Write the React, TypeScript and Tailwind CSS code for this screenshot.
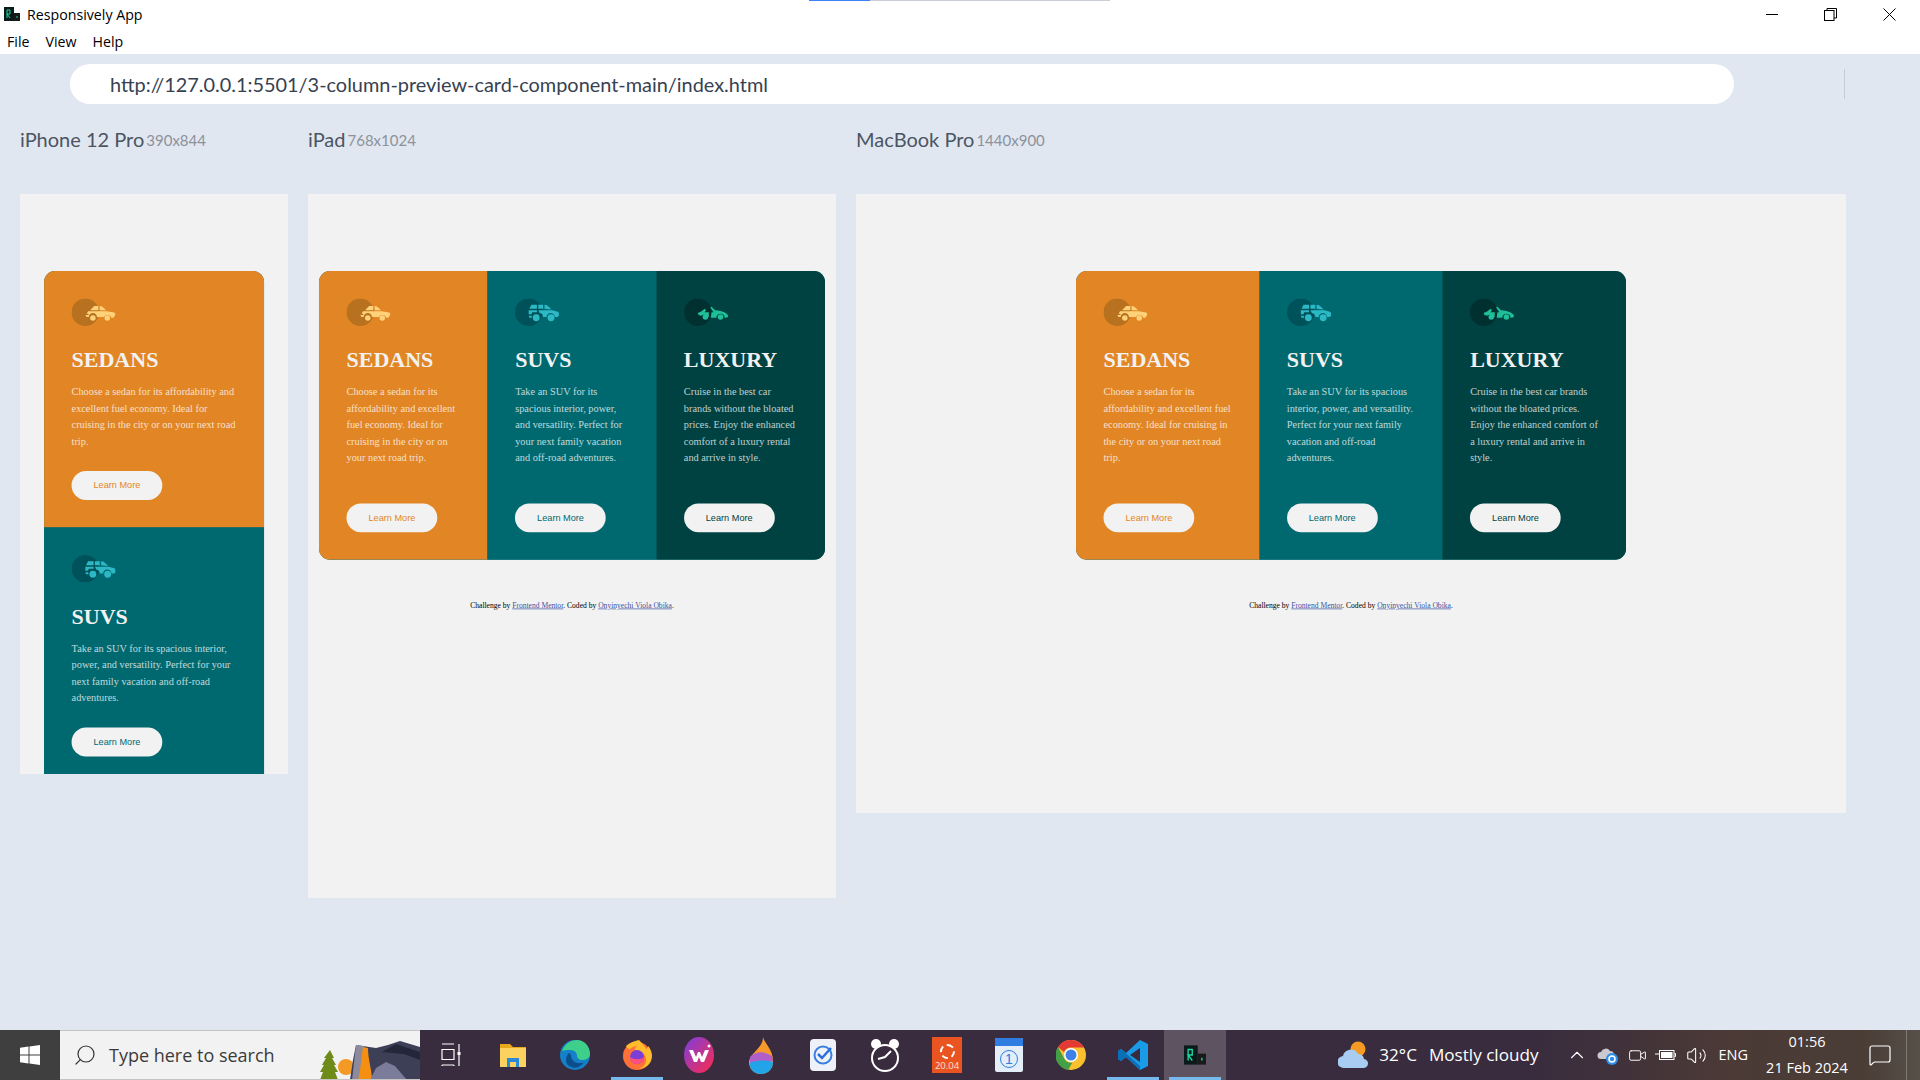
import {ChevronUp, MessageSquare, Search, Video, Volume2} from "lucide-react";
import type {ReactNode} from "react";

type CarKind = "sedan" | "suv" | "luxury";

type CardData = {
  kind: CarKind;
  title: string;
  text: string;
  column: string;
  button: string;
  circle: string;
  car: string;
};

const cards: CardData[] = [
  {
    kind: "sedan",
    title: "SEDANS",
    text: "Choose a sedan for its affordability and excellent fuel economy. Ideal for cruising in the city or on your next road trip.",
    column: "bg-[#e28625]",
    button: "text-[#e28625]",
    circle: "#b8711f",
    car: "#ffd27a"
  },
  {
    kind: "suv",
    title: "SUVS",
    text: "Take an SUV for its spacious interior, power, and versatility. Perfect for your next family vacation and off-road adventures.",
    column: "bg-[#006970]",
    button: "text-[#006970]",
    circle: "#00525a",
    car: "#2cb8c4"
  },
  {
    kind: "luxury",
    title: "LUXURY",
    text: "Cruise in the best car brands without the bloated prices. Enjoy the enhanced comfort of a luxury rental and arrive in style.",
    column: "bg-[#004241]",
    button: "text-[#004241]",
    circle: "#003130",
    car: "#1fbf9a"
  }
];

function CarIcon({kind, circle, car}: {kind: CarKind; circle: string; car: string}) {
  return (
    <svg width="64" height="40" viewBox="0 0 64 40" className="shrink-0">
      <circle cx="20" cy="20" r="20" fill={circle} />
      <g fill={car}>
        {kind === "sedan" ? (
          <>
            <path d="M33 11h6v6H27zM41 11c3 0 6 3 9 6h-9z" />
            <path d="M24 18.500h27l9 1.500c3 .5 4 1.500 4 3l-3 5h-3a6 6 0 0 0-11-1H37a6 6 0 0 0-12 0h-3l-2-3h5l-1-2h-2z" />
            <circle cx="31" cy="28.500" r="4" />
            <circle cx="52" cy="28.500" r="4" />
          </>
        ) : null}
        {kind === "suv" ? (
          <>
            <path d="M24 9h8v6H21zM34 9h7v6h-7zM43 9c4 0 7 3 10 7l-10-1z" />
            <path d="M20 17h12v3H25l-1 3h-4zM34 17h20l7 2c2 .5 3 1 3 3v3l-2 2h-4a6 6 0 0 0-12 0h-5a6 6 0 0 0-5-6z" />
            <path d="M20 25h4l1 3h-4z" />
            <circle cx="31" cy="28" r="5" />
            <circle cx="52.500" cy="28" r="5" />
          </>
        ) : null}
        {kind === "luxury" ? (
          <>
            <path d="M20 21l5-2 5-4 2 2-2 3h6v7h-1a7 7 0 0 0-10-2l-4-1z" />
            <path d="M38 13l2-1 5 5c6 0 13 2 17 5 2 1 2 3 2 5l-3 1h-2a6 6 0 0 0-12 0h-8l1-8h3z" />
            <circle cx="31" cy="27" r="4" />
            <circle cx="53" cy="27" r="4" />
          </>
        ) : null}
      </g>
    </svg>
  );
}

function CarCard({card, stacked}: {card: CardData; stacked: boolean}) {
  return (
    <div className={`flex flex-col p-10 ${stacked ? "h-[373px]" : "h-[420px] flex-1"} ${card.column}`}>
      <CarIcon kind={card.kind} circle={card.circle} car={card.car} />
      <h2 className="mt-[31px] font-['Liberation_Serif',serif] text-[32px] leading-[37px] font-bold text-[#f2f2f2]">
        {card.title}
      </h2>
      <p className="mt-[16px] font-['Liberation_Serif',serif] text-[15px] leading-[24px] text-white/75">{card.text}</p>
      <button
        className={`mt-auto h-[42px] w-[132px] shrink-0 rounded-full bg-[#f2f2f2] font-['Liberation_Sans',sans-serif] text-[13.33px] ${card.button}`}
      >
        Learn More
      </button>
    </div>
  );
}

// page under test, laid out at device size and scaled down like the real preview
function PreviewPage({stacked, cardWidth}: {stacked: boolean; cardWidth: string}) {
  const visible = stacked ? cards.slice(0, 2) : cards;

  return (
    <div className="pt-[112px]">
      <div
        className={`mx-auto flex overflow-hidden rounded-t-[16px] bg-[#006970] ${cardWidth} ${
          stacked ? "flex-col" : "rounded-b-[16px]"
        }`}
      >
        {visible.map((card) => (
          <CarCard key={card.kind} card={card} stacked={stacked} />
        ))}
      </div>
      {stacked ? null : (
        <p className="mt-[60px] text-center font-['Liberation_Serif',serif] text-[11px] leading-[13px] text-black">
          Challenge by <a className="text-[#3e52a3] underline">Frontend Mentor</a>. Coded by{" "}
          <a className="text-[#3e52a3] underline">Onyinyechi Viola Obika</a>.
        </p>
      )}
    </div>
  );
}

function DeviceColumn({
  name,
  size,
  frame,
  inner,
  page
}: {
  name: string;
  size: string;
  frame: string;
  inner: string;
  page: ReactNode;
}) {
  return (
    <div className="flex flex-col">
      <div className="flex h-[24px] -translate-y-px items-center gap-[2px] font-['Lato',sans-serif]">
        <span className="text-[20px] text-[#4b5563]">{name}</span>
        <span className="mt-[2px] text-[15px] text-[#8c929c]">{size}</span>
      </div>
      <div className={`mt-[42px] overflow-hidden bg-[#f2f2f2] ${frame}`}>
        <div className={`origin-top-left scale-[0.6875] ${inner}`}>{page}</div>
      </div>
    </div>
  );
}

function AppLogo({size = 16}: {size?: number}) {
  return (
    <svg width={size} height={size} viewBox="0 0 16 16">
      <rect x="0" y="1" width="10" height="14" fill="#0b1a1a" />
      <rect x="10" y="7" width="6" height="8" fill="#1a1a1a" />
      <path d="M3 12V4h3v4H3l3 4" fill="none" stroke="#1fd6a0" strokeWidth="1" />
      <rect x="12.500" y="10" width="1" height="2" fill="#1fd6a0" />
    </svg>
  );
}

function TitleBar() {
  return (
    <div className="relative h-[54px] bg-white font-['Open_Sans',sans-serif] text-[14.200px] text-black">
      <div className="absolute top-0 left-[809px] flex h-[1px]">
        <div className="h-[1px] w-[61px] bg-[#3b82f6]" />
        <div className="h-[1px] w-[240px] bg-[#c9ced6]" />
      </div>
      <div className="flex h-[28px] items-center justify-between pt-[1px]">
        <div className="flex items-center gap-[7px] pl-[4px]">
          <AppLogo />
          <span>Responsively App</span>
        </div>
        <div className="flex items-center pr-[1px]">
          <div className="flex h-[28px] w-[59px] items-center justify-center">
            <div className="h-[1px] w-[12px] bg-black" />
          </div>
          <div className="flex h-[28px] w-[58px] items-center justify-center">
            <svg width="13" height="13" viewBox="0 0 13 13" fill="none" stroke="black">
              <rect x=".5" y="2.500" width="9.500" height="10" />
              <path d="M3 2.500V.5h9.500v9.500H10" />
            </svg>
          </div>
          <div className="flex h-[28px] w-[60px] items-center justify-center">
            <svg width="13" height="13" viewBox="0 0 13 13" stroke="black">
              <path d="M.5.5l12 12M12.500.5l-12 12" />
            </svg>
          </div>
        </div>
      </div>
      <div className="flex h-[26px] items-center gap-[16px] pt-[1px] pl-[7px]">
        <span>File</span>
        <span>View</span>
        <span>Help</span>
      </div>
    </div>
  );
}

function AddressBar() {
  return (
    <div className="flex items-center pt-[10px]">
      <div className="ml-[70px] flex h-[40px] w-[1664px] items-center rounded-full bg-white pt-[1px] pl-[40px] font-['Lato',sans-serif] text-[19.900px] text-[#374151]">
        http://127.0.0.1:5501/3-column-preview-card-component-main/index.html
      </div>
      <div className="ml-[110px] h-[30px] w-[1px] bg-[#c5cbd4]" />
    </div>
  );
}

function TaskSlot({children, active, open}: {children: ReactNode; active?: boolean; open?: boolean}) {
  return (
    <div className={`relative flex h-[50px] w-[62px] items-center justify-center ${active ? "bg-[#5e5360]" : ""}`}>
      {children}
      {open ? <div className="absolute inset-x-[5px] bottom-0 h-[3px] bg-[#76b9ed]" /> : null}
    </div>
  );
}

function Scene() {
  return (
    <svg width="100" height="50" viewBox="0 0 100 50">
      <circle cx="26" cy="37" r="8" fill="#f39a24" />
      <path d="M10 20l4 8-2 0 4 7-2 0 4 7-3 0 3 8H0l3-8H0l4-7H2l4-7H4z" fill="#6e8a18" />
      <path d="M30 50l3-20 3-15 20 3 12-3 12-4 20 6v33z" fill="#3c3f55" />
      <path d="M36 15l8 1-3 34h-9z" fill="#8d8a9e" />
      <path d="M38 50c3-10 3-22 5-33l5 1c0 12 4 22 4 32z" fill="#f58f12" />
      <path d="M50 50l6-12 10-6 9 4 12 14z" fill="#7a7c9a" />
      <path d="M62 22l14-8 24 8v8l-16-6z" fill="#24263a" />
    </svg>
  );
}

function TaskIcons() {
  return (
    <div className="flex">
      <TaskSlot>
        <svg width="20" height="24" viewBox="0 0 20 24" fill="none" stroke="white" strokeWidth="1.200">
          <path d="M1 1h12M1 6.500h12v10H1zM1 22h12M13 23v-1M1 23v-1M18 1v22" />
          <rect x="16.500" y="9" width="3" height="3" fill="white" stroke="none" />
        </svg>
      </TaskSlot>
      <TaskSlot>
        <svg width="28" height="28" viewBox="0 0 28 28">
          <path d="M1 3h10l3 3h13v20H1z" fill="#e7a91a" />
          <path d="M1 7h26v19H1z" fill="#fbd25f" />
          <path d="M8 17h12v9h-3v-5h-6v5H8z" fill="#2b8ad8" />
        </svg>
      </TaskSlot>
      <TaskSlot>
        <svg width="30" height="30" viewBox="0 0 30 30">
          <circle cx="15" cy="15" r="15" fill="#1480c8" />
          <path d="M2 11C5 3 12 0 17 0c7 0 13 6 13 14 0 4-4 6-8 6-3 0-5-2-5-4 0-4-3-6-7-6-3 0-6 0-8 1z" fill="#3ed08a" />
          <path d="M11 15c0 5 4 9 10 8 1 0 2 0 3-1-3 5-9 7-13 5-6-2-6-9-3-13 1-1 2-1 3 1z" fill="#0c4d8c" />
        </svg>
      </TaskSlot>
      <TaskSlot open>
        <svg width="30" height="30" viewBox="0 0 30 30">
          <circle cx="15" cy="16" r="14" fill="#ff7139" />
          <path d="M4 6c1 2 2 3 4 3 2-2 5-3 7-3-2 2-3 3-2 4 6 0 11 4 11 10 0 4-3 8-8 9 7 0 14-5 14-13 0-4-2-8-4-10 0 2-1 3-2 3C22 5 19 2 17 0 12 1 7 3 4 6z" fill="#ffbd2e" />
          <circle cx="15" cy="17" r="7" fill="#7b3fd8" />
          <path d="M8 17a7 7 0 0 0 14 0c-3 3-10 3-14 0z" fill="#ff4f7e" />
        </svg>
      </TaskSlot>
      <TaskSlot>
        <svg width="30" height="36" viewBox="0 0 30 36">
          <defs>
            <linearGradient id="wps" x1="0" y1="0" x2="1" y2="1">
              <stop offset="0" stopColor="#7a3fe0" />
              <stop offset="1" stopColor="#ff2a4a" />
            </linearGradient>
          </defs>
          <ellipse cx="15" cy="18" rx="15" ry="18" fill="url(#wps)" />
          <path d="M5 13h4l3 7 2-5h2l2 5 3-7h4l-5 12h-3l-2-5-2 5h-3z" fill="white" />
          <circle cx="25" cy="9" r="1.500" fill="white" />
        </svg>
      </TaskSlot>
      <TaskSlot>
        <svg width="24" height="37" viewBox="0 0 24 37">
          <path d="M14 0c1 6 10 12 10 24a12 12 0 0 1-24 2C0 16 14 12 14 0z" fill="#f79a2b" />
          <path d="M1 20c6-6 14-6 22-1l1 5-23 5z" fill="#b15fc8" />
          <path d="M1 26c7-3 15-3 23-1 0 7-5 12-12 12S0 32 1 26z" fill="#22a4e8" />
        </svg>
      </TaskSlot>
      <TaskSlot>
        <svg width="26" height="32" viewBox="0 0 26 32">
          <rect width="26" height="32" rx="4" fill="#eef2f8" />
          <circle cx="13" cy="16" r="8.500" fill="none" stroke="#3d7fe0" strokeWidth="2" />
          <path d="M8 15l4 4 9-10" fill="none" stroke="#2b6fdc" strokeWidth="2.500" />
        </svg>
      </TaskSlot>
      <TaskSlot>
        <svg width="28" height="35" viewBox="0 0 28 35">
          <circle cx="5" cy="6" r="5" fill="white" />
          <circle cx="23" cy="6" r="5" fill="white" />
          <circle cx="14" cy="20" r="13" fill="#392c3e" stroke="white" strokeWidth="2" />
          <path d="M7 21l7-2 6-6" stroke="white" strokeWidth="2" fill="none" />
        </svg>
      </TaskSlot>
      <TaskSlot>
        <div className="flex h-[36px] w-[30px] flex-col items-center bg-[#e95420]">
          <div className="mt-[7px] h-[15px] w-[15px] rounded-full border-2 border-dashed border-white" />
          <span className="mt-[1px] font-['Open_Sans',sans-serif] text-[9.500px] leading-[12px] text-white/80">20.04</span>
        </div>
      </TaskSlot>
      <TaskSlot>
        <div className="flex h-[34px] w-[28px] flex-col items-center overflow-hidden rounded-[2px] bg-[#e4eef8]">
          <div className="h-[8px] w-full bg-[#2f7de0]" />
          <div className="mt-[4px] flex h-[18px] w-[18px] items-center justify-center rounded-full border border-[#2f7de0] font-['Liberation_Sans',sans-serif] text-[14px] text-[#2f7de0]">
            1
          </div>
        </div>
      </TaskSlot>
      <TaskSlot>
        <svg width="30" height="30" viewBox="0 0 30 30">
          <circle cx="15" cy="15" r="15" fill="#fbc02d" />
          <path d="M15 0a15 15 0 0 1 13 7.500H15a7.500 7.500 0 0 0-7 4.500L2 7a15 15 0 0 1 13-7z" fill="#e53935" />
          <path d="M2 7l6.500 12a7.500 7.500 0 0 0 8 3.500L12 30A15 15 0 0 1 2 7z" fill="#43a047" />
          <circle cx="15" cy="15" r="7" fill="white" />
          <circle cx="15" cy="15" r="5.500" fill="#3f7fe8" />
        </svg>
      </TaskSlot>
      <TaskSlot open>
        <svg width="30" height="30" viewBox="0 0 30 30">
          <path d="M22 0l8 4v22l-8 4L8 17l-5 4-3-2v-8l3-2 5 4z" fill="#1a9be8" />
          <path d="M22 8L12 15l10 7z" fill="#392c3e" />
          <path d="M0 11l3-2 19 17v4l-14-13-5 4-3-2z" fill="#0a6fb8" />
        </svg>
      </TaskSlot>
      <TaskSlot active open>
        <AppLogo size={22} />
      </TaskSlot>
    </div>
  );
}

function Tray() {
  return (
    <div className="ml-auto flex h-full items-center font-['Open_Sans',sans-serif] text-white">
      <svg className="mr-[11px]" width="30" height="30" viewBox="0 0 30 30">
        <circle cx="20" cy="9" r="7.500" fill="#f59a23" />
        <path d="M6 28a6 6 0 0 1-1-12 8 8 0 0 1 15-2 6 6 0 0 1 6 5 4.500 4.500 0 0 1-1 9z" fill="#a9cdf2" />
      </svg>
      <span className="text-[17.100px]">32°C</span>
      <span className="ml-[12px] text-[17.100px]">Mostly cloudy</span>
      <ChevronUp className="ml-[28px]" size={22} strokeWidth={1.200} />
      <svg className="ml-[9px]" width="21" height="22" viewBox="0 0 21 22">
        <path d="M4 15a3.500 3.500 0 0 1 0-7 5 5 0 0 1 9-1 4 4 0 0 1 4 4v4z" fill="#c9c9cf" />
        <circle cx="15" cy="15" r="6" fill="#2d8fe8" />
        <circle cx="15" cy="15" r="3" fill="none" stroke="white" strokeWidth="1.500" />
      </svg>
      <Video className="ml-[10px]" size={19} strokeWidth={1.200} />
      <svg className="ml-[8px]" width="21" height="14" viewBox="0 0 21 14" fill="none" stroke="white">
        <rect x="4.500" y="2.500" width="14.500" height="9" />
        <rect x="6" y="4" width="11.500" height="6" fill="white" stroke="none" />
        <path d="M19.500 5.500h1v3h-1M0 6h4" />
      </svg>
      <Volume2 className="ml-[10px]" size={21} strokeWidth={1.200} />
      <span className="ml-[11px] text-[14.500px]">ENG</span>
      <div className="ml-[17px] flex w-[84px] flex-col items-center text-[14.500px] leading-[26px]">
        <span>01:56</span>
        <span className="whitespace-nowrap">21 Feb 2024</span>
      </div>
      <MessageSquare className="ml-[19px]" size={24} strokeWidth={1.200} />
      <div className="ml-[14px] h-full w-[1px] bg-white/25" />
      <div className="h-full w-[13px]" />
    </div>
  );
}

function Taskbar() {
  return (
    <div className="flex h-[50px] bg-[linear-gradient(90deg,#392c3e_0%,#392c3e_80%,#4b3a36_90%,#4a3d36_97%,#565049_100%)]">
      <div className="flex w-[60px] items-center justify-center bg-[#3f3f3f]">
        <svg width="20" height="20" viewBox="0 0 20 20" fill="white">
          <path d="M0 2.800l8.500-1.200v8H0zM9.500 1.400L20 0v9.600H9.500zM0 10.500h8.500v8L0 17.200zM9.500 10.500H20V20L9.500 18.600z" />
        </svg>
      </div>
      <div className="flex w-[360px] items-center justify-between overflow-hidden border-y border-[#c4c4c4] bg-[#f2f2f2] pl-[13px] font-['Open_Sans',sans-serif] text-[18px] text-[#333]">
        <div className="flex items-center gap-[12px]">
          <Search size={24} strokeWidth={1.200} className="-scale-x-100" />
          <span className="text-[#3b3b3b]">Type here to search</span>
        </div>
        <Scene />
      </div>
      <TaskIcons />
      <Tray />
    </div>
  );
}

export default function App() {
  return (
    <div className="flex h-[1080px] w-[1920px] flex-col overflow-hidden bg-[#e1e7f0]">
      <TitleBar />
      <AddressBar />
      <div className="flex flex-1 items-start gap-[20px] pt-[24px] pl-[20px]">
        <DeviceColumn
          name="iPhone 12 Pro"
          size="390x844"
          frame="h-[580px] w-[268px]"
          inner="h-[844px] w-[390px]"
          page={<PreviewPage stacked cardWidth="w-[320px]" />}
        />
        <DeviceColumn
          name="iPad"
          size="768x1024"
          frame="h-[704px] w-[528px]"
          inner="h-[1024px] w-[768px]"
          page={<PreviewPage stacked={false} cardWidth="w-[736px]" />}
        />
        <DeviceColumn
          name="MacBook Pro"
          size="1440x900"
          frame="h-[619px] w-[990px]"
          inner="h-[900px] w-[1440px]"
          page={<PreviewPage stacked={false} cardWidth="w-[800px]" />}
        />
      </div>
      <Taskbar />
    </div>
  );
}
